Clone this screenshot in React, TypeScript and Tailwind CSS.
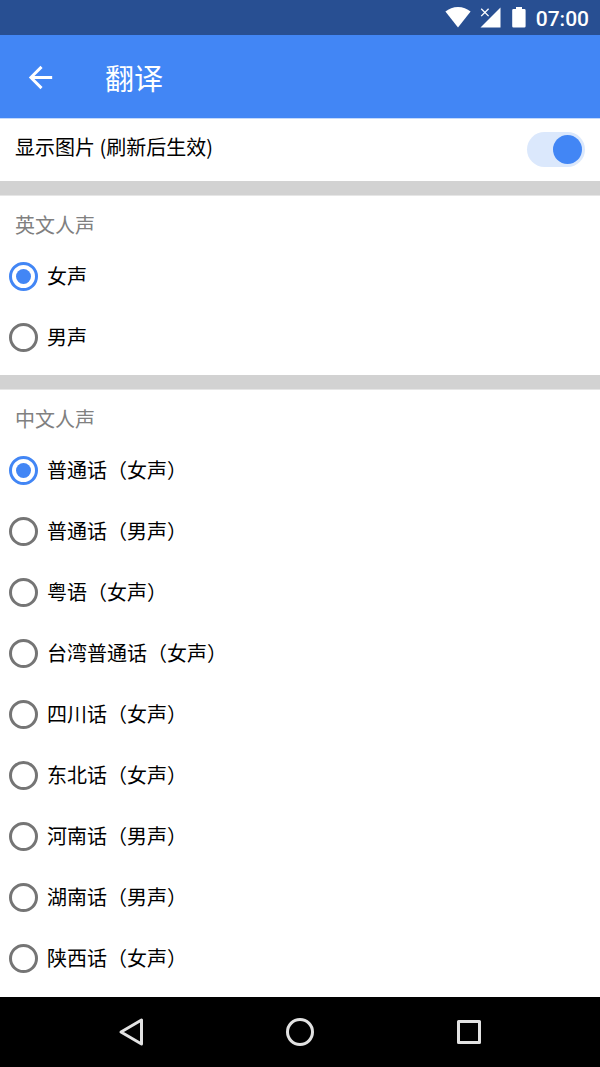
import { useState } from "react";

type VoiceOption = {
  id: string;
  label: string;
};

const ENGLISH_VOICES: VoiceOption[] = [
  { id: "en-female", label: "女声" },
  { id: "en-male", label: "男声" },
];

const CHINESE_VOICES: VoiceOption[] = [
  { id: "mandarin-female", label: "普通话（女声）" },
  { id: "mandarin-male", label: "普通话（男声）" },
  { id: "cantonese-female", label: "粤语（女声）" },
  { id: "taiwan-female", label: "台湾普通话（女声）" },
  { id: "sichuan-female", label: "四川话（女声）" },
  { id: "dongbei-female", label: "东北话（女声）" },
  { id: "henan-male", label: "河南话（男声）" },
  { id: "hunan-male", label: "湖南话（男声）" },
  { id: "shaanxi-female", label: "陕西话（女声）" },
];

function StatusBar() {
  return (
    <div className="flex h-[35px] items-center justify-end gap-[9px] bg-[#284f92] pr-[11px] text-white">
      <svg className="h-[35px] w-[26px]" viewBox="0 0 26 35" fill="currentColor" aria-hidden="true">
        <path d="M13 27.5 0.4 11.6C3.8 8.7 8.2 7 13 7s9.200 1.700 12.600 4.600z" />
      </svg>
      <svg className="h-[35px] w-[22px]" viewBox="0 0 22 35" aria-hidden="true">
        <path d="M20.500 7.500v20H0.500z" fill="currentColor" />
        <path d="M1.200 8.700l7.400 7.400M8.600 8.700l-7.400 7.400" stroke="#284f92" strokeWidth="4" />
        <path d="M1.200 8.700l7.400 7.400M8.600 8.700l-7.400 7.400" stroke="currentColor" strokeWidth="1.300" />
      </svg>
      <svg className="h-[35px] w-4" viewBox="0 0 16 35" fill="currentColor" aria-hidden="true">
        <path d="M5 7h6v2h2.300q1.300 0 1.300 1.300v16q0 1.300-1.300 1.300H2.500q-1.300 0-1.300-1.300v-16Q1.200 9 2.500 9H5z" />
      </svg>
      <span className="pt-[3px] font-[Roboto,sans-serif] text-[21px] leading-8 font-medium">07:00</span>
    </div>
  );
}

function TitleBar() {
  return (
    <header className="flex h-[84px] items-center border-b border-[#c3d9fc] bg-[#4286f5] pt-0.5 pl-[23px] text-white">
      <button type="button" aria-label="返回">
        <svg className="size-[35px]" viewBox="0 0 24 24" fill="currentColor" aria-hidden="true">
          <path d="M20 11H7.830l5.590-5.590L12 4l-8 8 8 8 1.410-1.410L7.830 13H20v-2z" />
        </svg>
      </button>
      <h1 className="ml-[47px] pb-0.5 text-[29px] leading-10">翻译</h1>
    </header>
  );
}

function Divider() {
  return <div className="h-[15px] border-b border-[#e6e6e6] bg-[#d2d2d2]" />;
}

function VoiceGroup({
  title,
  name,
  options,
  initial,
}: {
  title: string;
  name: string;
  options: VoiceOption[];
  initial: string;
}) {
  const [selected, setSelected] = useState(initial);

  return (
    <fieldset className="pb-[7px]">
      <legend className="h-[50px] px-[15px] pt-[15px] leading-7 text-[#808080]">{title}</legend>
      {options.map((option) => (
        <label className="flex h-[61px] items-center gap-[9px] pl-[9px]" key={option.id}>
          <input
            className="grid size-[29px] shrink-0 appearance-none place-content-center rounded-full border-3 border-[#757575] before:size-[15px] before:rounded-full before:bg-transparent checked:border-[#4286f5] checked:before:bg-[#4286f5]"
            type="radio"
            name={name}
            value={option.id}
            checked={selected === option.id}
            onChange={() => setSelected(option.id)}
          />
          <span className="pb-0.5 leading-7">{option.label}</span>
        </label>
      ))}
    </fieldset>
  );
}

function NavigationBar() {
  return (
    <nav className="h-[70px] bg-black text-[#e2e2e2]">
      <div className="mx-auto grid h-full max-w-[507px] grid-cols-3 place-items-center">
        <button type="button" aria-label="后退">
          <svg className="size-8" viewBox="0 0 32 32" fill="none" stroke="currentColor" strokeWidth="3" strokeLinejoin="round" aria-hidden="true">
            <path d="M26.500 4v24L6 16z" />
          </svg>
        </button>
        <button type="button" aria-label="主屏幕">
          <svg className="size-8" viewBox="0 0 32 32" fill="none" stroke="currentColor" strokeWidth="3" aria-hidden="true">
            <circle cx="16" cy="16" r="12.500" />
          </svg>
        </button>
        <button type="button" aria-label="最近任务">
          <svg className="size-8" viewBox="0 0 32 32" fill="none" stroke="currentColor" strokeWidth="3" strokeLinejoin="round" aria-hidden="true">
            <path d="M5.500 5.500h21v21h-21z" />
          </svg>
        </button>
      </div>
    </nav>
  );
}

export default function App() {
  const [showImages, setShowImages] = useState(true);

  return (
    <div className="flex min-h-screen flex-col bg-white font-['Noto_Sans_CJK_SC',sans-serif] text-[20px] text-black" lang="zh-CN">
      <StatusBar />
      <TitleBar />
      <main className="flex-1">
        <label className="flex h-[62px] items-start justify-between px-[15px] pt-[13px]">
          <span className="leading-[30px]">显示图片 (刷新后生效)</span>
          <input
            className="flex h-[35px] w-[58px] shrink-0 appearance-none items-center rounded-full bg-[#dbe8fc] px-[3px] before:size-[29px] before:rounded-full before:bg-[#9e9e9e] checked:justify-end checked:before:bg-[#4286f5]"
            type="checkbox"
            role="switch"
            checked={showImages}
            onChange={(event) => setShowImages(event.target.checked)}
          />
        </label>
        <Divider />
        <VoiceGroup title="英文人声" name="english-voice" options={ENGLISH_VOICES} initial="en-female" />
        <Divider />
        <VoiceGroup title="中文人声" name="chinese-voice" options={CHINESE_VOICES} initial="mandarin-female" />
      </main>
      <NavigationBar />
    </div>
  );
}
